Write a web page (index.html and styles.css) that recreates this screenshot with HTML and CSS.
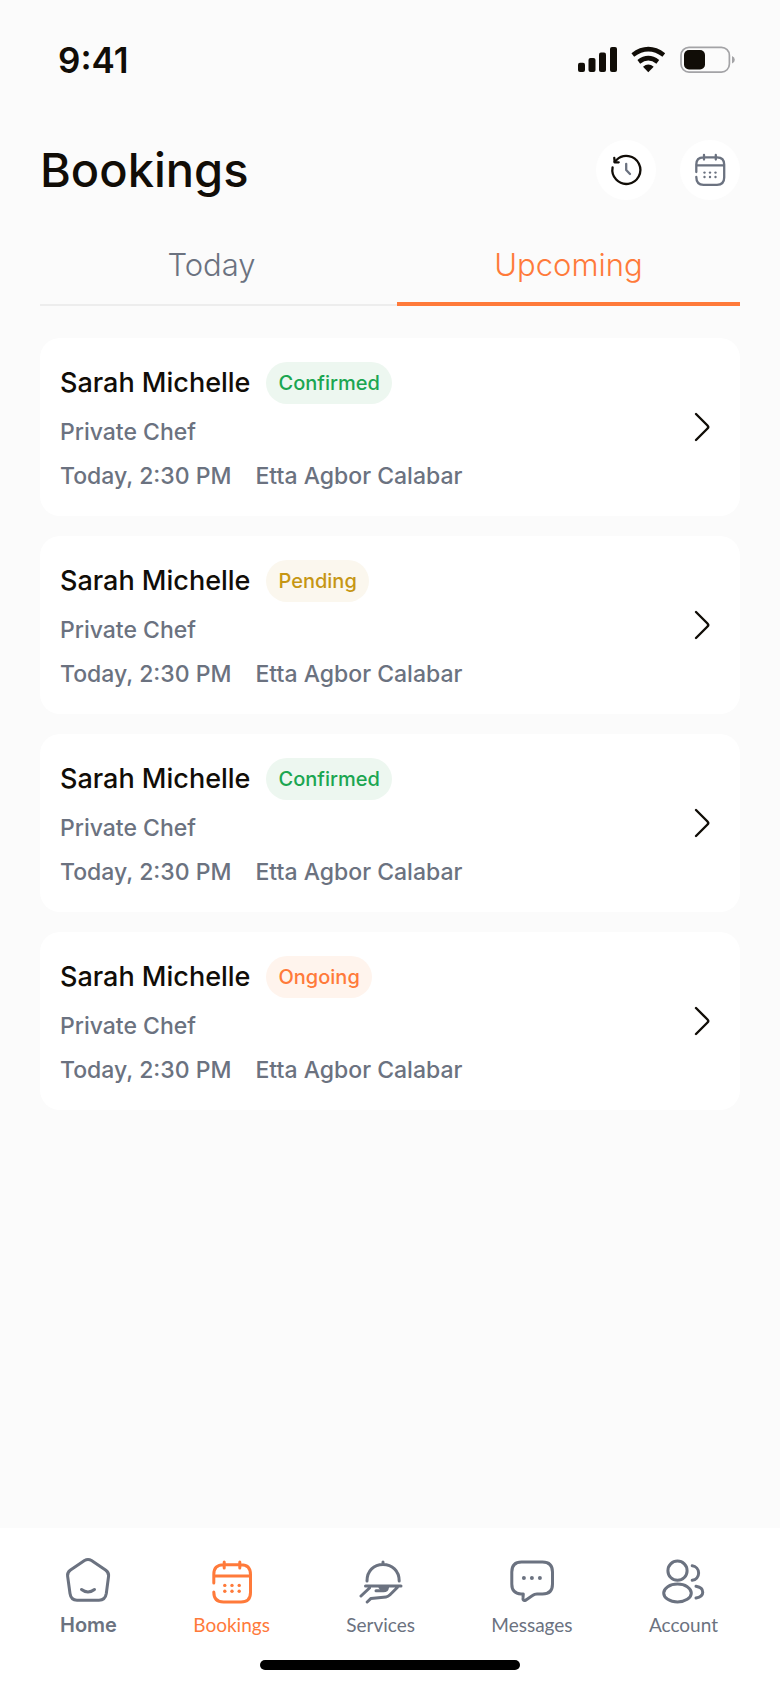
FILE: index.html
```
<!DOCTYPE html>
<html lang="en">
<head>
<meta charset="utf-8">
<meta name="viewport" content="width=device-width, initial-scale=1">
<title>Bookings</title>
<link rel="stylesheet" href="styles.css">
</head>
<body class="screen">
<svg class="defs" width="0" height="0" aria-hidden="true">
  <symbol id="chevron" viewBox="0 0 20 36"><path d="M4 5 L15.500 16.500 Q17 18 15.500 19.500 L4 31" /></symbol>
</svg>

<div class="status">
  <span class="clock">9:41</span>
  <svg class="status-icons" viewBox="0 0 160 32" role="img" aria-label="Signal, Wi-Fi, battery">
    <g fill="#110d07">
      <rect x="2" y="18.700" width="7" height="9.300" rx="2"/>
      <rect x="12.500" y="14" width="7" height="14" rx="2"/>
      <rect x="23" y="8.500" width="7" height="19.500" rx="2"/>
      <rect x="34" y="3" width="7" height="25" rx="2"/>
      <path d="M67 22.700 Q72.300 18.500 77.700 22.700 L72.300 28.200 Z"/>
      <rect x="108" y="6" width="21" height="19.500" rx="5"/>
    </g>
    <g fill="none" stroke="#110d07" stroke-width="4.600">
      <path d="M56.800 11 Q72.300 -0.600 87.800 11"/>
      <path d="M62.800 17.800 Q72.300 10.600 81.800 17.800"/>
    </g>
    <rect x="105" y="3.300" width="48.400" height="24.800" rx="8" fill="none" stroke="#a3a3a6" stroke-width="1.700"/>
    <path d="M156 12 Q158.800 13 158.800 15.800 Q158.800 18.600 156 19.600 Z" fill="#a3a3a6"/>
  </svg>
</div>

<main class="content">
  <header class="header">
    <h1 class="title">Bookings</h1>
    <div class="actions">
      <button class="round" type="button" aria-label="History">
        <svg class="round-icon" viewBox="0 0 60 60">
          <path class="ink" d="M16.600 27.300 A14 14 0 1 0 20.500 20 L18.600 21.900"/>
          <path class="ink" d="M18.300 18 L18.700 22.300 L22.700 22.300"/>
          <path d="M30.200 23.800 V30 L34 34"/>
        </svg>
      </button>
      <button class="round" type="button" aria-label="Calendar">
        <svg class="round-icon" viewBox="0 0 60 60">
          <path d="M16.300 32 V24.500 Q16.300 17.300 23.500 17.300 H37 Q44.200 17.300 44.200 24.500 V37.500 Q44.200 44.800 37 44.800 H23.500 Q16.300 44.800 16.300 37 M16.300 25.400 H44.200 M24 15 V19.600 M35.800 15 V19.600"/>
          <g class="dots"><circle cx="24.500" cy="32.600" r="1.200"/><circle cx="30" cy="32.600" r="1.200"/><circle cx="35.500" cy="32.600" r="1.200"/><circle cx="24.500" cy="37" r="1.200"/><circle cx="30" cy="37" r="1.200"/><circle cx="35.500" cy="37" r="1.200"/></g>
        </svg>
      </button>
    </div>
  </header>

  <div class="tabs" role="tablist">
    <button class="tab" type="button" role="tab" aria-selected="false">Today</button>
    <button class="tab tab-active" type="button" role="tab" aria-selected="true">Upcoming</button>
  </div>

  <div class="cards">
    <a class="card" href="#">
      <div class="details">
        <div class="name-row"><h2 class="name">Sarah Michelle</h2><span class="badge confirmed">Confirmed</span></div>
        <p class="meta">Private Chef</p>
        <p class="meta meta-row"><span>Today, 2:30 PM</span><span>Etta Agbor Calabar</span></p>
      </div>
      <svg class="chevron" aria-hidden="true"><use href="#chevron"/></svg>
    </a>
    <a class="card" href="#">
      <div class="details">
        <div class="name-row"><h2 class="name">Sarah Michelle</h2><span class="badge pending">Pending</span></div>
        <p class="meta">Private Chef</p>
        <p class="meta meta-row"><span>Today, 2:30 PM</span><span>Etta Agbor Calabar</span></p>
      </div>
      <svg class="chevron" aria-hidden="true"><use href="#chevron"/></svg>
    </a>
    <a class="card" href="#">
      <div class="details">
        <div class="name-row"><h2 class="name">Sarah Michelle</h2><span class="badge confirmed">Confirmed</span></div>
        <p class="meta">Private Chef</p>
        <p class="meta meta-row"><span>Today, 2:30 PM</span><span>Etta Agbor Calabar</span></p>
      </div>
      <svg class="chevron" aria-hidden="true"><use href="#chevron"/></svg>
    </a>
    <a class="card" href="#">
      <div class="details">
        <div class="name-row"><h2 class="name">Sarah Michelle</h2><span class="badge ongoing">Ongoing</span></div>
        <p class="meta">Private Chef</p>
        <p class="meta meta-row"><span>Today, 2:30 PM</span><span>Etta Agbor Calabar</span></p>
      </div>
      <svg class="chevron" aria-hidden="true"><use href="#chevron"/></svg>
    </a>
  </div>
</main>

<footer class="dock">
  <nav class="nav" aria-label="Main">
    <a class="nav-item nav-home" href="#">
      <svg class="nav-icon" viewBox="0 0 48 48"><path d="M20.500 4.500 Q24 2.300 27.500 4.500 L41.500 14 Q45 16.500 44.600 20 L42.300 37.500 Q41.200 44.200 35 44.200 H13 Q7 44.200 6 37.500 L3.600 20 Q3 16.500 6.500 14 Z M17.500 33.500 Q24 38.500 30.500 33.500"/></svg>
      <span>Home</span>
    </a>
    <a class="nav-item nav-current" href="#" aria-current="page">
      <svg class="nav-icon" viewBox="0 0 48 48"><path d="M5.800 27 V18.500 Q5.800 8.700 15.500 8.700 H33 Q42.500 8.700 42.500 18.500 V36.500 Q42.500 46 33 46 H15.500 Q5.800 46 5.800 36 M5.800 20 H42.500 M16.200 6 V12 M31.800 6 V12"/><g class="dots"><circle cx="16.800" cy="29.400" r="1.700"/><circle cx="24" cy="29.400" r="1.700"/><circle cx="31.200" cy="29.400" r="1.700"/><circle cx="16.800" cy="35.200" r="1.700"/><circle cx="24" cy="35.200" r="1.700"/><circle cx="31.200" cy="35.200" r="1.700"/></g></svg>
      <span>Bookings</span>
    </a>
    <a class="nav-item" href="#">
      <svg class="nav-icon" viewBox="0 0 48 48"><path d="M10 25 C10 14.500 17 8.500 26 8.500 S42.200 14.500 42.200 25 M26 6 V8 M8.500 30 H44 M4 40 L12.500 32 M10.200 46 L14 42.400 L29 41 Q31 40.800 33 38.800 L40.300 31.500 M19 34.800 H26.500 Q30 34.800 30.500 31.500 M23 31.500 Q26 33.500 28 31.500"/></svg>
      <span>Services</span>
    </a>
    <a class="nav-item" href="#">
      <svg class="nav-icon" viewBox="0 0 48 48"><path d="M13.500 6 H34.500 Q44.500 6 44.500 16 V28 Q44.500 38 34.500 38 H29 Q26.500 38 24.500 39.500 L18 44 Q14.500 45.500 15 41.500 L15.300 38 H13 Q3.800 37.500 3.800 28 V16 Q3.800 6 13.500 6 Z"/><g class="dots"><circle cx="15.900" cy="22" r="2"/><circle cx="23.900" cy="22" r="2"/><circle cx="31.900" cy="22" r="2"/></g></svg>
      <span>Messages</span>
    </a>
    <a class="nav-item" href="#">
      <svg class="nav-icon" viewBox="0 0 48 48"><circle cx="18.500" cy="14.700" r="9.600"/><ellipse cx="18.500" cy="37" rx="13.800" ry="9"/><path d="M33.200 9.800 A7.300 7.300 0 0 1 33.200 24.300 M37 30.300 C46 32 46 40.300 37 42"/></svg>
      <span>Account</span>
    </a>
  </nav>
  <div class="home-bar"></div>
</footer>
</body>
</html>
```
FILE: styles.css
```
* { box-sizing: border-box; }
.screen {
  margin: 0;
  min-height: 100vh;
  display: flex;
  flex-direction: column;
  background: #fbfbfb;
  color: #110d07;
  font-family: Inter, "Liberation Sans", sans-serif;
}
.defs { position: absolute; }
.status {
  display: flex;
  justify-content: space-between;
  align-items: center;
  height: 120px;
  padding: 0 44px 0 58px;
}
.clock { font-size: 35px; line-height: 40px; font-weight: 600; }
.status-icons { width: 160px; height: 32px; }
.content { padding: 20px 40px; }
.header { display: flex; justify-content: space-between; align-items: center; height: 60px; }
.title { margin: 0; font-size: 47px; line-height: 60px; font-weight: 500; }
.actions { display: flex; gap: 24px; }
.round {
  width: 60px;
  height: 60px;
  padding: 0;
  border: 0;
  border-radius: 50%;
  background: #fff;
}
.round-icon {
  display: block;
  width: 60px;
  height: 60px;
  fill: none;
  stroke: #6b7280;
  stroke-width: 2.300;
  stroke-linecap: round;
  stroke-linejoin: round;
}
.ink { stroke: #110d07; }
.dots { fill: currentColor; stroke: none; }
.round .dots { fill: #6b7280; }
.tabs {
  display: grid;
  grid-template-columns: 1fr 1fr;
  gap: 14px;
  margin-top: 30px;
  box-shadow: inset 0 -2px #ededed;
}
.tab {
  height: 76px;
  padding: 0 0 2px;
  border: 0;
  border-bottom: 4px solid transparent;
  background: none;
  color: #6b7280;
  font: 300 31px/40px Inter, "Liberation Sans", sans-serif;
}
.tab-active { border-bottom-color: #ff7a3a; color: #ff7a3a; }
.cards { display: grid; gap: 20px; margin-top: 32px; }
.card {
  display: flex;
  justify-content: space-between;
  align-items: center;
  padding: 24px 28px 24px 20px;
  border-radius: 20px;
  background: #fff;
  color: inherit;
  text-decoration: none;
}
.name-row { display: flex; align-items: center; gap: 16px; }
.name { margin: 0; font-size: 27px; line-height: 36px; font-weight: 500; }
.badge { padding: 9px 12px; border-radius: 21px; font-size: 20px; line-height: 24px; font-weight: 500; }
.confirmed { background: #edf7f0; color: #1ba651; }
.pending { background: #fbf7ee; color: #c69614; }
.ongoing { background: #fff4ed; color: #ff7a3a; }
.meta { margin: 12px 0 0; color: #6b7280; font-size: 23px; line-height: 32px; font-weight: 500; }
.meta-row { display: flex; gap: 24px; }
.chevron {
  width: 20px;
  height: 36px;
  fill: none;
  stroke: #110d07;
  stroke-width: 2.400;
  stroke-linecap: round;
}
.dock { padding: 28px 0 18px; margin-top: auto; background: #fff; }
.nav { display: flex; justify-content: space-between; padding: 0 62px 0 60px; }
.nav-item {
  display: flex;
  flex-direction: column;
  align-items: center;
  gap: 8px;
  color: #6b7280;
  font: 400 19px/26px Lato, sans-serif;
  text-decoration: none;
}
.nav-home { font: 600 20px/26px Inter, sans-serif; }
.nav-current { color: #ff7a3a; }
.nav-icon {
  width: 48px;
  height: 48px;
  fill: none;
  stroke: currentColor;
  stroke-width: 3;
  stroke-linecap: round;
  stroke-linejoin: round;
}
.home-bar { width: 260px; height: 10px; margin: 22px auto 0; border-radius: 5px; background: #000; }
```
